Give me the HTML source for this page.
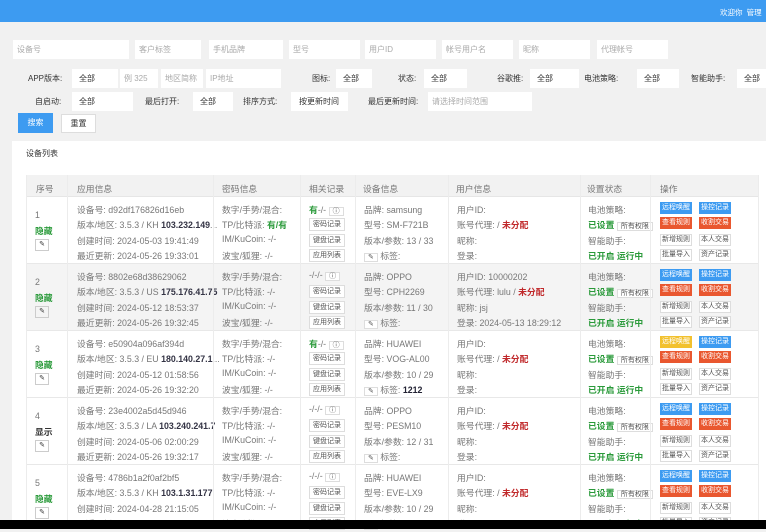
<!DOCTYPE html>
<html><head><meta charset="utf-8"><style>
*{margin:0;padding:0;box-sizing:border-box}
body{width:766px;height:529px;overflow:hidden;background:#f1f1f1;font-family:"Liberation Sans","Noto Sans CJK SC",sans-serif;font-size:8.8px;color:#777;position:relative}
.a{position:absolute;white-space:nowrap}
.hdr{left:0;top:0;width:766px;height:22px;background:#3d9bf1}
.in{position:absolute;background:#fff;height:19px;color:#aaa;padding-left:4px;line-height:19px;font-size:8px}
.sel{position:absolute;background:#fff;height:19px;color:#333;padding-left:7px;line-height:19px;font-size:8px}
.lb{position:absolute;color:#333;font-size:8px;line-height:19px}
.card{left:12px;top:141px;width:754px;height:380px;background:#fff}
.th{left:26px;top:175px;width:732px;height:22px;background:#f2f2f2;border-bottom:1px solid #e6e6e6}
.row{position:absolute;left:26px;width:732px;height:67px;border-bottom:1px solid #e8e8e8}
.row div{position:absolute;white-space:nowrap}
.vl{position:absolute;top:175px;height:350px;width:1px;background:#ececec}
.b{color:#333;font-weight:bold}
.g{color:#2a9a3a;font-weight:bold}
.r{color:#c0282a;font-weight:bold}
.sb{border:1px solid #ddd;font-size:7px;padding:0 3px;line-height:11px;color:#555;background:#fff}
.ed{border:1px solid #ccc;width:14px;height:12px;font-size:7px;text-align:center;line-height:10px;color:#333}
.op{width:32px;height:12px;font-size:7px;text-align:center;line-height:12px;color:#fff}
.bl{background:#3d9bf1}.or{background:#e9572f}.ye{background:#f2c12e}
.wh{border:1px solid #ddd;color:#555;line-height:10px;background:#fff}
</style></head><body>
<div class="a hdr"></div>
<div class="a" style="left:720px;top:7px;color:#fff;font-size:7.5px">欢迎你&nbsp; 管理</div>

<div class="in" style="left:13px;top:40px;width:116px">设备号</div>
<div class="in" style="left:135px;top:40px;width:66px">客户标签</div>
<div class="in" style="left:209px;top:40px;width:74px">手机品牌</div>
<div class="in" style="left:289px;top:40px;width:71px">型号</div>
<div class="in" style="left:365px;top:40px;width:71px">用户ID</div>
<div class="in" style="left:442px;top:40px;width:71px">帐号用户名</div>
<div class="in" style="left:519px;top:40px;width:71px">昵称</div>
<div class="in" style="left:597px;top:40px;width:71px">代理帐号</div>

<div class="lb" style="left:28px;top:69px">APP版本:</div>
<div class="sel" style="left:72px;top:69px;width:46px">全部</div>
<div class="in" style="left:120px;top:69px;width:38px">例 325</div>
<div class="in" style="left:161px;top:69px;width:42px">地区简称</div>
<div class="in" style="left:206px;top:69px;width:75px">IP地址</div>
<div class="lb" style="left:312px;top:69px">图标:</div>
<div class="sel" style="left:336px;top:69px;width:36px">全部</div>
<div class="lb" style="left:398px;top:69px">状态:</div>
<div class="sel" style="left:424px;top:69px;width:43px">全部</div>
<div class="lb" style="left:497px;top:69px">谷歌推:</div>
<div class="sel" style="left:530px;top:69px;width:49px">全部</div>
<div class="lb" style="left:584px;top:69px">电池策略:</div>
<div class="sel" style="left:637px;top:69px;width:42px">全部</div>
<div class="lb" style="left:691px;top:69px">智能助手:</div>
<div class="sel" style="left:737px;top:69px;width:40px">全部</div>

<div class="lb" style="left:35px;top:92px">自启动:</div>
<div class="sel" style="left:72px;top:92px;width:61px">全部</div>
<div class="lb" style="left:145px;top:92px">最后打开:</div>
<div class="sel" style="left:193px;top:92px;width:40px">全部</div>
<div class="lb" style="left:243px;top:92px">排序方式:</div>
<div class="sel" style="left:291px;top:92px;width:57px;padding-left:8px">按更新时间</div>
<div class="lb" style="left:368px;top:92px">最后更新时间:</div>
<div class="in" style="left:428px;top:92px;width:104px">请选择时间范围</div>

<div class="a" style="left:18px;top:113px;width:35px;height:20px;background:#3d9bf1;color:#fff;line-height:20px;text-align:center;font-size:8px">搜索</div>
<div class="a" style="left:61px;top:114px;width:35px;height:19px;background:#fff;border:1px solid #ddd;color:#333;line-height:17px;text-align:center;font-size:8px">重置</div>

<div class="a card"></div>
<div class="a" style="left:26px;top:148px;color:#333;font-size:8px">设备列表</div>
<div class="a th"></div>
<div class="a" style="left:36px;top:182px">序号</div>
<div class="a" style="left:77px;top:182px">应用信息</div>
<div class="a" style="left:222px;top:182px">密码信息</div>
<div class="a" style="left:309px;top:182px">相关记录</div>
<div class="a" style="left:363px;top:182px">设备信息</div>
<div class="a" style="left:456px;top:182px">用户信息</div>
<div class="a" style="left:587px;top:182px">设置状态</div>
<div class="a" style="left:660px;top:182px">操作</div>

<div class="row" style="top:197px">
<div style="left:9px;top:13px">1</div><div class="g" style="left:9px;top:27px">隐藏</div><div class="ed" style="left:9px;top:42px">✎</div>
<div style="left:51px;top:6px">设备号: d92df176826d16eb</div>
<div style="left:51px;top:21px">版本/地区: 3.5.3 / KH <span class="b" style="color:#334">103.232.149</span>...</div>
<div style="left:51px;top:37px">创建时间: 2024-05-03 19:41:49</div>
<div style="left:51px;top:52px">最近更新: 2024-05-26 19:33:01</div>
<div style="left:196px;top:6px">数字/手势/混合:</div>
<div style="left:196px;top:21px">TP/比特派: <span class="g">有/有</span></div>
<div style="left:196px;top:37px">IM/KuCoin: -/-</div>
<div style="left:196px;top:52px">波宝/狐狸: -/-</div>
<div style="left:283px;top:6px"><span class="g">有</span>-/- <span class="sb">ⓘ</span></div>
<div class="sb" style="left:283px;top:21px">密码记录</div><div class="sb" style="left:283px;top:37px">键盘记录</div><div class="sb" style="left:283px;top:52px">应用列表</div>
<div style="left:338px;top:6px">品牌: samsung</div><div style="left:338px;top:21px">型号: SM-F721B</div><div style="left:338px;top:37px">版本/参数: 13 / 33</div><div style="left:338px;top:52px"><span class="sb">✎</span> 标签:</div>
<div style="left:431px;top:6px">用户ID:</div><div style="left:431px;top:21px">账号代理: / <span class="r">未分配</span></div><div style="left:431px;top:37px">昵称:</div><div style="left:431px;top:52px">登录:</div>
<div style="left:562px;top:6px">电池策略:</div><div style="left:562px;top:21px"><span class="g">已设置</span> <span class="sb">所有权限</span></div><div style="left:562px;top:37px">智能助手:</div><div class="g" style="left:562px;top:52px">已开启 运行中</div>
<div class="op bl" style="left:634px;top:5px">远程唤醒</div><div class="op bl" style="left:673px;top:5px">操控记录</div>
<div class="op or" style="left:634px;top:20px">查看规则</div><div class="op or" style="left:673px;top:20px">收割交易</div>
<div class="op wh" style="left:634px;top:37px">新增规则</div><div class="op wh" style="left:673px;top:37px">本人交易</div>
<div class="op wh" style="left:634px;top:52px">批量导入</div><div class="op wh" style="left:673px;top:52px">资产记录</div>
</div>

<div class="row" style="top:264px;background:#f4f4f4">
<div style="left:9px;top:13px">2</div><div class="g" style="left:9px;top:27px">隐藏</div><div class="ed" style="left:9px;top:42px">✎</div>
<div style="left:51px;top:6px">设备号: 8802e68d38629062</div>
<div style="left:51px;top:21px">版本/地区: 3.5.3 / US <span class="b" style="color:#334">175.176.41.75</span></div>
<div style="left:51px;top:37px">创建时间: 2024-05-12 18:53:37</div>
<div style="left:51px;top:52px">最近更新: 2024-05-26 19:32:45</div>
<div style="left:196px;top:6px">数字/手势/混合:</div><div style="left:196px;top:21px">TP/比特派: -/-</div><div style="left:196px;top:37px">IM/KuCoin: -/-</div><div style="left:196px;top:52px">波宝/狐狸: -/-</div>
<div style="left:283px;top:6px">-/-/- <span class="sb">ⓘ</span></div>
<div class="sb" style="left:283px;top:21px">密码记录</div><div class="sb" style="left:283px;top:37px">键盘记录</div><div class="sb" style="left:283px;top:52px">应用列表</div>
<div style="left:338px;top:6px">品牌: OPPO</div><div style="left:338px;top:21px">型号: CPH2269</div><div style="left:338px;top:37px">版本/参数: 11 / 30</div><div style="left:338px;top:52px"><span class="sb">✎</span> 标签:</div>
<div style="left:431px;top:6px">用户ID: 10000202</div><div style="left:431px;top:21px">账号代理: lulu / <span class="r">未分配</span></div><div style="left:431px;top:37px">昵称: jsj</div><div style="left:431px;top:52px">登录: 2024-05-13 18:29:12</div>
<div style="left:562px;top:6px">电池策略:</div><div style="left:562px;top:21px"><span class="g">已设置</span> <span class="sb">所有权限</span></div><div style="left:562px;top:37px">智能助手:</div><div class="g" style="left:562px;top:52px">已开启 运行中</div>
<div class="op bl" style="left:634px;top:5px">远程唤醒</div><div class="op bl" style="left:673px;top:5px">操控记录</div>
<div class="op or" style="left:634px;top:20px">查看规则</div><div class="op or" style="left:673px;top:20px">收割交易</div>
<div class="op wh" style="left:634px;top:37px">新增规则</div><div class="op wh" style="left:673px;top:37px">本人交易</div>
<div class="op wh" style="left:634px;top:52px">批量导入</div><div class="op wh" style="left:673px;top:52px">资产记录</div>
</div>

<div class="row" style="top:331px">
<div style="left:9px;top:13px">3</div><div class="g" style="left:9px;top:27px">隐藏</div><div class="ed" style="left:9px;top:42px">✎</div>
<div style="left:51px;top:6px">设备号: e50904a096af394d</div>
<div style="left:51px;top:21px">版本/地区: 3.5.3 / EU <span class="b" style="color:#334">180.140.27.1</span>...</div>
<div style="left:51px;top:37px">创建时间: 2024-05-12 01:58:56</div>
<div style="left:51px;top:52px">最近更新: 2024-05-26 19:32:20</div>
<div style="left:196px;top:6px">数字/手势/混合:</div><div style="left:196px;top:21px">TP/比特派: -/-</div><div style="left:196px;top:37px">IM/KuCoin: -/-</div><div style="left:196px;top:52px">波宝/狐狸: -/-</div>
<div style="left:283px;top:6px"><span class="g">有</span>-/- <span class="sb">ⓘ</span></div>
<div class="sb" style="left:283px;top:21px">密码记录</div><div class="sb" style="left:283px;top:37px">键盘记录</div><div class="sb" style="left:283px;top:52px">应用列表</div>
<div style="left:338px;top:6px">品牌: HUAWEI</div><div style="left:338px;top:21px">型号: VOG-AL00</div><div style="left:338px;top:37px">版本/参数: 10 / 29</div><div style="left:338px;top:52px"><span class="sb">✎</span> 标签: <span class="b" style="color:#223">1212</span></div>
<div style="left:431px;top:6px">用户ID:</div><div style="left:431px;top:21px">账号代理: / <span class="r">未分配</span></div><div style="left:431px;top:37px">昵称:</div><div style="left:431px;top:52px">登录:</div>
<div style="left:562px;top:6px">电池策略:</div><div style="left:562px;top:21px"><span class="g">已设置</span> <span class="sb">所有权限</span></div><div style="left:562px;top:37px">智能助手:</div><div class="g" style="left:562px;top:52px">已开启 运行中</div>
<div class="op ye" style="left:634px;top:5px">远程唤醒</div><div class="op bl" style="left:673px;top:5px">操控记录</div>
<div class="op or" style="left:634px;top:20px">查看规则</div><div class="op or" style="left:673px;top:20px">收割交易</div>
<div class="op wh" style="left:634px;top:37px">新增规则</div><div class="op wh" style="left:673px;top:37px">本人交易</div>
<div class="op wh" style="left:634px;top:52px">批量导入</div><div class="op wh" style="left:673px;top:52px">资产记录</div>
</div>

<div class="row" style="top:398px">
<div style="left:9px;top:13px">4</div><div class="b" style="left:9px;top:27px">显示</div><div class="ed" style="left:9px;top:42px">✎</div>
<div style="left:51px;top:6px">设备号: 23e4002a5d45d946</div>
<div style="left:51px;top:21px">版本/地区: 3.5.3 / LA <span class="b" style="color:#334">103.240.241.7</span></div>
<div style="left:51px;top:37px">创建时间: 2024-05-06 02:00:29</div>
<div style="left:51px;top:52px">最近更新: 2024-05-26 19:32:17</div>
<div style="left:196px;top:6px">数字/手势/混合:</div><div style="left:196px;top:21px">TP/比特派: -/-</div><div style="left:196px;top:37px">IM/KuCoin: -/-</div><div style="left:196px;top:52px">波宝/狐狸: -/-</div>
<div style="left:283px;top:6px">-/-/- <span class="sb">ⓘ</span></div>
<div class="sb" style="left:283px;top:21px">密码记录</div><div class="sb" style="left:283px;top:37px">键盘记录</div><div class="sb" style="left:283px;top:52px">应用列表</div>
<div style="left:338px;top:6px">品牌: OPPO</div><div style="left:338px;top:21px">型号: PESM10</div><div style="left:338px;top:37px">版本/参数: 12 / 31</div><div style="left:338px;top:52px"><span class="sb">✎</span> 标签:</div>
<div style="left:431px;top:6px">用户ID:</div><div style="left:431px;top:21px">账号代理: / <span class="r">未分配</span></div><div style="left:431px;top:37px">昵称:</div><div style="left:431px;top:52px">登录:</div>
<div style="left:562px;top:6px">电池策略:</div><div style="left:562px;top:21px"><span class="g">已设置</span> <span class="sb">所有权限</span></div><div style="left:562px;top:37px">智能助手:</div><div class="g" style="left:562px;top:52px">已开启 运行中</div>
<div class="op bl" style="left:634px;top:5px">远程唤醒</div><div class="op bl" style="left:673px;top:5px">操控记录</div>
<div class="op or" style="left:634px;top:20px">查看规则</div><div class="op or" style="left:673px;top:20px">收割交易</div>
<div class="op wh" style="left:634px;top:37px">新增规则</div><div class="op wh" style="left:673px;top:37px">本人交易</div>
<div class="op wh" style="left:634px;top:52px">批量导入</div><div class="op wh" style="left:673px;top:52px">资产记录</div>
</div>

<div class="row" style="top:465px;border-bottom:none">
<div style="left:9px;top:13px">5</div><div class="g" style="left:9px;top:27px">隐藏</div><div class="ed" style="left:9px;top:42px">✎</div>
<div style="left:51px;top:6px">设备号: 4786b1a2f0af2bf5</div>
<div style="left:51px;top:21px">版本/地区: 3.5.3 / KH <span class="b" style="color:#334">103.1.31.177</span></div>
<div style="left:51px;top:37px">创建时间: 2024-04-28 21:15:05</div>
<div style="left:51px;top:52px">最近更新: 2024-05-26 19:32:00</div>
<div style="left:196px;top:6px">数字/手势/混合:</div><div style="left:196px;top:21px">TP/比特派: -/-</div><div style="left:196px;top:37px">IM/KuCoin: -/-</div><div style="left:196px;top:52px">波宝/狐狸: -/-</div>
<div style="left:283px;top:6px">-/-/- <span class="sb">ⓘ</span></div>
<div class="sb" style="left:283px;top:21px">密码记录</div><div class="sb" style="left:283px;top:37px">键盘记录</div><div class="sb" style="left:283px;top:52px">应用列表</div>
<div style="left:338px;top:6px">品牌: HUAWEI</div><div style="left:338px;top:21px">型号: EVE-LX9</div><div style="left:338px;top:37px">版本/参数: 10 / 29</div><div style="left:338px;top:52px"><span class="sb">✎</span> 标签:</div>
<div style="left:431px;top:6px">用户ID:</div><div style="left:431px;top:21px">账号代理: / <span class="r">未分配</span></div><div style="left:431px;top:37px">昵称:</div><div style="left:431px;top:52px">登录:</div>
<div style="left:562px;top:6px">电池策略:</div><div style="left:562px;top:21px"><span class="g">已设置</span> <span class="sb">所有权限</span></div><div style="left:562px;top:37px">智能助手:</div><div class="g" style="left:562px;top:52px">已开启 运行中</div>
<div class="op bl" style="left:634px;top:5px">远程唤醒</div><div class="op bl" style="left:673px;top:5px">操控记录</div>
<div class="op or" style="left:634px;top:20px">查看规则</div><div class="op or" style="left:673px;top:20px">收割交易</div>
<div class="op wh" style="left:634px;top:37px">新增规则</div><div class="op wh" style="left:673px;top:37px">本人交易</div>
<div class="op wh" style="left:634px;top:52px">批量导入</div><div class="op wh" style="left:673px;top:52px">资产记录</div>
</div>

<div class="vl" style="left:26px"></div><div class="vl" style="left:67px"></div><div class="vl" style="left:213px"></div><div class="vl" style="left:300px"></div><div class="vl" style="left:355px"></div><div class="vl" style="left:448px"></div><div class="vl" style="left:580px"></div><div class="vl" style="left:650px"></div><div class="vl" style="left:758px"></div>

<div class="a" style="left:0;top:520px;width:766px;height:9px;background:#000"></div>
</body></html>
